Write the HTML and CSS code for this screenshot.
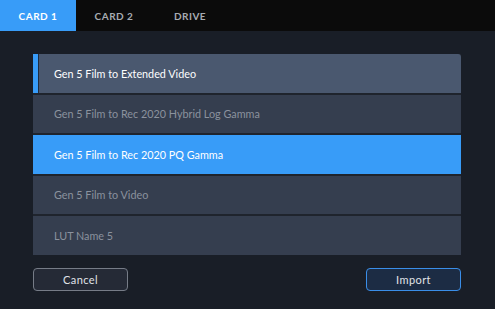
FILE: index.html
```html
<!DOCTYPE html>
<html lang="en">
<head>
    <meta charset="UTF-8">
    <title>Import LUT</title>
    <link rel="stylesheet" href="styles.css">
</head>
<body>
    <div id="tabs">
        <div class="tab active">CARD 1</div>
        <div class="tab">CARD 2</div>
        <div class="tab">DRIVE</div>
    </div>

    <div id="content">
        <div class="lut-list">
            <div class="lut-item current">Gen 5 Film to Extended Video</div>
            <div class="lut-item">Gen 5 Film to Rec 2020 Hybrid Log Gamma</div>
            <div class="lut-item selected">Gen 5 Film to Rec 2020 PQ Gamma</div>
            <div class="lut-item">Gen 5 Film to Video</div>
            <div class="lut-item">LUT Name 5</div>
        </div>

        <div class="actions">
            <button class="btn">Cancel</button>
            <button class="btn primary">Import</button>
        </div>
    </div>
</body>
</html>
```

FILE: styles.css
```css
body {
    margin: 0;
    padding: 0;
    font-family: Lato, "Open Sans", sans-serif;
    background: #191e27;
    color: white;
    overflow: hidden;
}

#tabs {
    display: flex;
    height: 31px;
    background: #0b0b0b;
}

.tab {
    width: 76px;
    display: flex;
    align-items: center;
    justify-content: center;
    font-size: 10px;
    font-weight: bold;
    letter-spacing: 0.5px;
    color: #a7abb2;
}

.tab.active {
    background: #389cf8;
    color: white;
}

#content {
    padding: 23px 34px 0 33px;
}

.lut-list {
    display: flex;
    flex-direction: column;
    gap: 2px;
    background: #1f242d;
}

.lut-item {
    height: 38.5px;
    display: flex;
    align-items: center;
    padding-left: 21px;
    background: #353e4f;
    color: #8b929e;
    font-size: 10.8px;
}

.lut-item.current {
    background: #4a586f;
    color: white;
    border-radius: 0 3px 0 0;
    box-shadow: inset 5px 0 0 #389cf8, inset 6px 0 0 #1f2c3f;
}

.lut-item.selected {
    background: #389cf8;
    color: white;
}

.actions {
    display: flex;
    justify-content: space-between;
    margin-top: 13px;
}

.btn {
    width: 95px;
    height: 23px;
    background: #252a36;
    border: 1px solid #767c87;
    border-radius: 4px;
    color: #e0e3e8;
    font-family: inherit;
    font-size: 11px;
    letter-spacing: 0.4px;
}

.btn.primary {
    background: #1c2c44;
    border-color: #3a8ee8;
}
```
